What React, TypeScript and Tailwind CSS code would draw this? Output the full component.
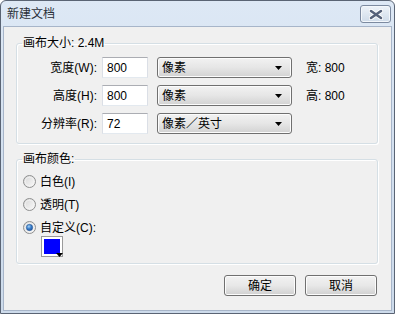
import React from "react";

const FONT = '"Liberation Sans","Noto Sans CJK SC",sans-serif';

function Combo({ text }: { text: string }) {
  return (
    <div className="w-[135px] h-[21px] ml-[9px] rounded-[3px] border border-[#707070] bg-gradient-to-b from-[#f2f2f2] via-[#e6e6e6] to-[#d2d2d2] flex items-center justify-between pl-[4px] pr-[9px] shadow-[inset_0_0_0_1px_#fcfcfc]">
      <span className="text-[12px] leading-[14px] text-black">{text}</span>
      <svg width="7" height="4" viewBox="0 0 7 4">
        <path d="M0 0h7L3.5 4z" fill="#000" />
      </svg>
    </div>
  );
}

function Row({ label, value, unit, extra }: { label: string; value: string; unit: string; extra?: string }) {
  return (
    <div className="flex items-center h-[21px]">
      <div className="w-[80px] text-right text-[12px] leading-[14px] text-black">{label}</div>
      <div className="w-[46px] h-[21px] ml-[5px] bg-white border border-[#dbdfe6] border-t-[#abadb3] border-b-[#e3e9ef] flex items-center pl-[4px] text-[12px] leading-[14px] text-black">
        {value}
      </div>
      <Combo text={unit} />
      {extra && <div className="ml-[14px] text-[12px] leading-[14px] text-black">{extra}</div>}
    </div>
  );
}

function Radio({ checked, label }: { checked?: boolean; label: string }) {
  return (
    <div className="flex items-center h-[17px]">
      <svg width="13" height="13" viewBox="0 0 13 13">
        <defs>
          <linearGradient id="rg" x1="0" y1="0" x2="1" y2="1">
            <stop offset="0" stopColor="#d6d6d6" />
            <stop offset="1" stopColor="#fbfbfb" />
          </linearGradient>
          <radialGradient id="bd" cx="0.4" cy="0.35" r="0.7">
            <stop offset="0" stopColor="#a8d4f8" />
            <stop offset="0.5" stopColor="#3a7fcb" />
            <stop offset="1" stopColor="#1e4f9a" />
          </radialGradient>
        </defs>
        <circle cx="6.5" cy="6.5" r="6" fill="url(#rg)" stroke="#8e8f8f" strokeWidth="1" />
        <circle cx="6.5" cy="6.5" r="4.3" fill="none" stroke="#f4f4f4" strokeWidth="0.8" />
        {checked && <circle cx="6.5" cy="6.5" r="3.2" fill="url(#bd)" stroke="#2b5a94" strokeWidth="0.5" />}
      </svg>
      <span className="ml-[4px] text-[12px] leading-[14px] text-black">{label}</span>
    </div>
  );
}

function Btn({ text }: { text: string }) {
  return (
    <div className="w-[72px] h-[21px] rounded-[3px] border border-[#707070] bg-gradient-to-b from-[#f2f2f2] via-[#e8e8e8] to-[#d0d0d0] shadow-[inset_0_0_0_1px_#fcfcfc] flex items-center justify-center text-[12px] leading-[14px] text-black">
      {text}
    </div>
  );
}

export default function App() {
  return (
    <div className="w-[397px] h-[315px] bg-white" style={{ fontFamily: FONT }}>
      <div className="w-[395px] h-[314px] border border-[#5a6474] rounded-t-[6px] bg-gradient-to-b from-[#dde8f5] via-[#d3e0ef] to-[#cddbeb] flex flex-col">
        <div className="h-[25px] flex items-center justify-between pl-[6px] pr-[3px]">
          <span className="text-[12px] leading-[14px] text-[#2a2f38]">新建文档</span>
          <div className="w-[31px] h-[18px] mt-[1px] rounded-[3px] border border-[#7c8aa0] bg-gradient-to-b from-[#eef3f9] to-[#cfdbe9] shadow-[inset_0_0_0_1px_#f3f7fb] flex items-center justify-center">
            <svg width="14" height="11" viewBox="0 0 14 11">
              <path d="M2 2l10 7M12 2L2 9" stroke="#ffffff" strokeWidth="4.4" strokeLinecap="round" />
              <path d="M2 2l10 7M12 2L2 9" stroke="#56627a" strokeWidth="2.6" strokeLinecap="round" />
            </svg>
          </div>
        </div>
        <div className="flex-1 mx-[2px] mb-[2px] border border-[#a7b5c9] bg-[#f0f0f0] flex flex-col">
          <fieldset className="ml-[12px] mt-[9px] w-[362px] border border-[#d5dfe5] rounded-[3px] shadow-[inset_1px_1px_0_#ffffff,1px_1px_0_#ffffff] pt-[7px] pb-[9px]">
            <legend className="ml-[5px] px-[1px] text-[12px] leading-[14px] text-black">画布大小: 2.4M</legend>
            <div className="flex flex-col gap-[7px]">
              <Row label="宽度(W):" value="800" unit="像素" extra="宽: 800" />
              <Row label="高度(H):" value="800" unit="像素" extra="高: 800" />
              <Row label="分辨率(R):" value="72" unit="像素／英寸" />
            </div>
          </fieldset>
          <fieldset className="ml-[12px] mt-[8px] w-[362px] border border-[#d5dfe5] rounded-[3px] shadow-[inset_1px_1px_0_#ffffff,1px_1px_0_#ffffff] pt-[7px] pb-[6px] pl-[6px]">
            <legend className="ml-[-1px] px-[1px] text-[12px] leading-[14px] text-black">画布颜色:</legend>
            <div className="flex flex-col gap-[6px]">
              <Radio label="白色(I)" />
              <Radio label="透明(T)" />
              <Radio checked label="自定义(C):" />
            </div>
            <div className="relative ml-[18px] w-[22px] h-[21px] border border-[#9a9a9a] bg-white p-[2px]">
              <div className="w-full h-full bg-[#0000ff]" />
              <svg className="absolute right-[-1px] bottom-[-2px]" width="7" height="5" viewBox="0 0 7 5">
                <path d="M0 0h7L3.5 4z" fill="#000" />
              </svg>
            </div>
          </fieldset>
          <div className="flex justify-end gap-[9px] mt-[11px] pr-[14px]">
            <Btn text="确定" />
            <Btn text="取消" />
          </div>
        </div>
      </div>
    </div>
  );
}
